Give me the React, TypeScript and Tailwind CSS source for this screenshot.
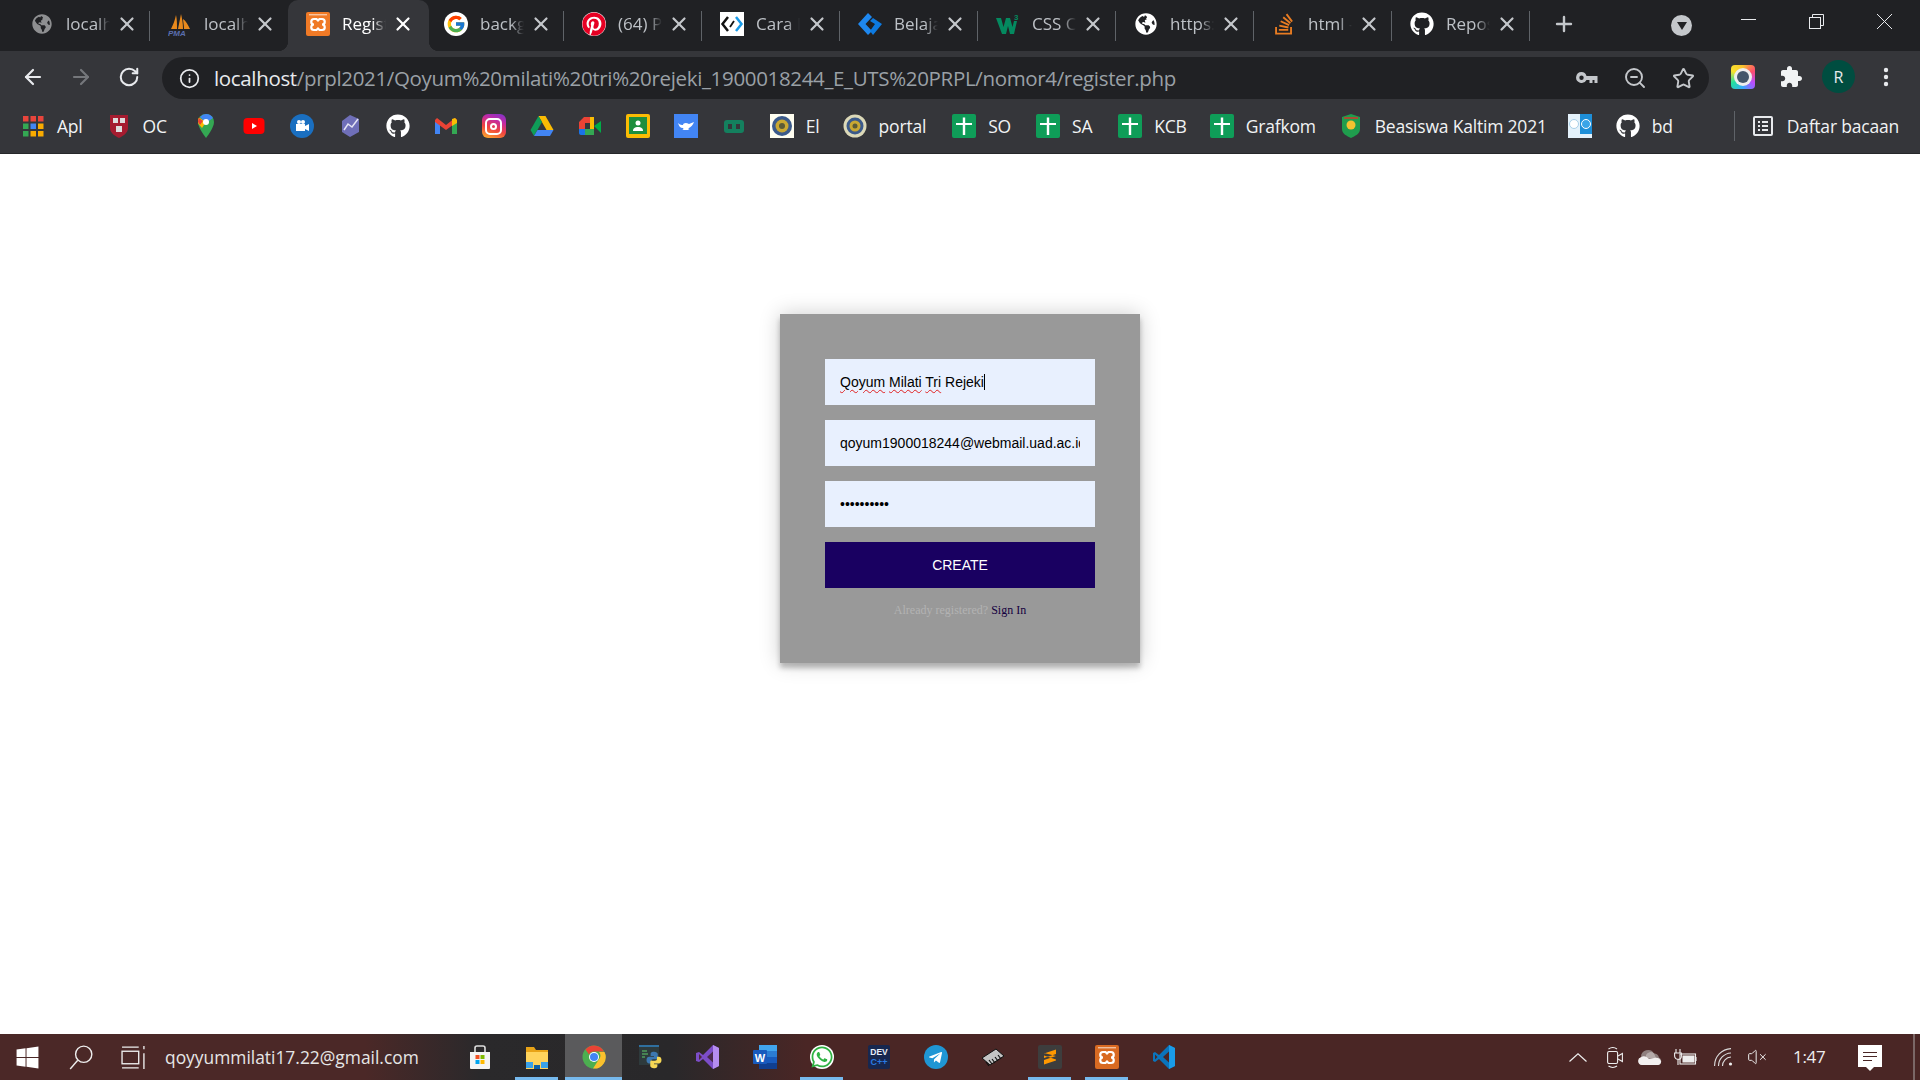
import React from "react";
import { FaGithub, FaGlobeAmericas, FaPinterest, FaStackOverflow, FaWhatsapp, FaTelegramPlane, FaWindows } from "react-icons/fa";
import { FcGoogle } from "react-icons/fc";
import { ArrowLeft, ArrowRight, RotateCw, Info, ZoomOut, Star, Plus, X, VolumeX } from "lucide-react";

const Xampp = ({ dim = false }: { dim?: boolean }) => (
  <svg viewBox="0 0 24 24" className="w-6 h-6">
    <rect x="0" y="0" width="24" height="24" rx="2" fill={dim ? "#d96a22" : "#f07a26"} />
    <path d="M3 2.800h18" stroke="#fff" strokeWidth="1" opacity="0.8" />
    <path d="M10.500 7H8a2.700 2.700 0 0 0 0 5.500 2.700 2.700 0 0 0 0 5.500h2.500l1.500-1.500 1.500 1.500H16a2.700 2.700 0 0 0 0-5.500 2.700 2.700 0 0 0 0-5.500h-2.500L12 8.500z" stroke="#fff" strokeWidth="2.200" fill="none" />
  </svg>
);

const Pma = () => (
  <svg viewBox="0 0 24 24" className="w-6 h-6">
    <path d="M3 17C5 13 7 8 8 3c1 4 1 9 1 14zM10 17c1-5 2-10 3-15 1 4 2 9 2 15zM16 17c0-4-1-8-1-10 3 2 5 6 7 10z" fill="#e8891d" />
    <text x="0" y="23.500" fontSize="8" fontStyle="italic" fontWeight="700" fill="#5b6fb0" fontFamily="Liberation Sans, sans-serif">PMA</text>
  </svg>
);

const GoogleFav = () => (
  <span className="w-6 h-6 rounded-full bg-white flex items-center justify-center"><FcGoogle className="w-5 h-5" /></span>
);
const PinFav = () => (
  <span className="w-6 h-6 rounded-full bg-white flex items-center justify-center"><FaPinterest className="w-6 h-6 text-[#e60023]" /></span>
);
const CaraFav = () => (
  <svg viewBox="0 0 24 24" className="w-6 h-6">
    <rect width="24" height="24" fill="#fff" />
    <path d="M8 5 2.500 12 8 19" stroke="#111" strokeWidth="2.500" fill="none" />
    <path d="M16 5l5.500 7-5.500 7" stroke="#1a9be8" strokeWidth="2.500" fill="none" />
    <path d="M10 15l4-6" stroke="#111" strokeWidth="1.800" />
  </svg>
);
const BelajarFav = () => (
  <svg viewBox="0 0 24 24" className="w-6 h-6">
    <path d="M10 1 0 12l10 11 4-4-6.500-7L14 5z" fill="#1e88f0" />
    <path d="M15 6l9 6-9 11-3-4 5-7-5-3z" fill="#0d7ae0" />
  </svg>
);
const W3Fav = () => (
  <svg viewBox="0 0 24 24" className="w-6 h-6">
    <path d="M0 6h5l2.500 9L10 6h4l2.500 9L18 9h3l-3 13h-4l-2-8-2 8H6z" fill="#04895f" />
    <text x="18" y="8" fontSize="8" fontWeight="700" fill="#04895f" fontFamily="Liberation Sans, sans-serif">3</text>
  </svg>
);
const GlobeWhite = () => <span className="w-6 h-6 rounded-full flex items-center justify-center"><FaGlobeAmericas className="w-[22px] h-[22px] text-white" /></span>;
const GitFav = () => <span className="w-6 h-6 rounded-full flex items-center justify-center"><FaGithub className="w-6 h-6 text-white" /></span>;

const tabs: { icon: React.ReactNode; label: string; active?: boolean }[] = [
  { icon: <FaGlobeAmericas className="w-5 h-5 text-[#8e8f91]" />, label: "localhost / 127" },
  { icon: <Pma />, label: "localhost / 127" },
  { icon: <Xampp />, label: "Register", active: true },
  { icon: <GoogleFav />, label: "background" },
  { icon: <PinFav />, label: "(64) Pinterest" },
  { icon: <CaraFav />, label: "Cara Membuat" },
  { icon: <BelajarFav />, label: "Belajar Web" },
  { icon: <W3Fav />, label: "CSS Colors" },
  { icon: <GlobeWhite />, label: "https://www" },
  { icon: <FaStackOverflow className="w-6 h-6 text-[#e87c22]" />, label: "html - Stack" },
  { icon: <GitFav />, label: "Repository" },
];

const Tab = ({ icon, label, active, sep }: { icon: React.ReactNode; label: string; active?: boolean; sep: boolean }) => (
  <div className={`relative h-[51px] flex items-center shrink-0 pb-[3px] ${active ? "bg-[#35363a] rounded-t-[10px] w-[141px] -mr-[3px]" : "w-[138px]"}`}>
    {active && <span className="absolute left-[-10px] bottom-0 w-[10px] h-[10px] bg-[radial-gradient(circle_at_0_0,#202124_10px,#35363a_10.5px)]" />}
    {active && <span className="absolute right-[-10px] bottom-0 w-[10px] h-[10px] bg-[radial-gradient(circle_at_100%_0,#202124_10px,#35363a_10.5px)]" />}
    <span className="ml-[18px] w-6 h-6 flex items-center justify-center shrink-0">{icon}</span>
    <span className={`ml-[12px] w-[44px] overflow-hidden whitespace-nowrap text-[17px] leading-[24px] [mask-image:linear-gradient(90deg,#000_70%,transparent)] ${active ? "text-white" : "text-[#bdc1c6]"}`}>{label}</span>
    <X className={`ml-[6px] w-[22px] h-[22px] shrink-0 ${active ? "text-white" : "text-[#c4c7cb]"}`} strokeWidth={2.4} />
    {sep && <span className="absolute right-0 top-[11px] h-[30px] w-px bg-[#5f6368]" />}
  </div>
);

const TabBar = () => (
  <div className="h-[51px] bg-[#202124] flex items-center pl-[12px] shrink-0">
    {tabs.map((t, i) => (
      <Tab key={i} icon={t.icon} label={t.label} active={t.active} sep={!t.active && i !== 1} />
    ))}
    <Plus className="ml-[22px] w-6 h-6 text-[#c4c7cb] shrink-0 -mt-[3px]" strokeWidth={2.4} />
    <span className="ml-[95px] w-[21px] h-[21px] rounded-full bg-[#c4c7cb] flex items-center justify-center shrink-0">
      <span className="w-0 h-0 border-l-[5px] border-r-[5px] border-t-[8px] border-l-transparent border-r-transparent border-t-[#202124]" />
    </span>
    <svg viewBox="0 0 15 15" className="ml-[49px] w-[15px] h-[15px] -mt-[8px] shrink-0" stroke="#e8eaed" strokeWidth="1"><path d="M0 5.500h15" /></svg>
    <svg viewBox="0 0 15 15" className="ml-[53px] w-[15px] h-[15px] -mt-[8px] shrink-0" fill="none" stroke="#e8eaed" strokeWidth="1"><rect x=".5" y="3.500" width="11" height="11" /><path d="M3.500 3.500V.5h11v11h-3" /></svg>
    <svg viewBox="0 0 15 15" className="ml-[53px] w-[15px] h-[15px] -mt-[8px] shrink-0" stroke="#e8eaed" strokeWidth="1"><path d="M0 0l15 15M15 0 0 15" /></svg>
  </div>
);

const RingExt = () => (
  <span className="w-6 h-[24px] rounded-[4px] bg-[conic-gradient(#f9c22e,#ff4d6d,#b84dff,#38a6ff,#22e0a0,#f9e22e,#f9c22e)] flex items-center justify-center">
    <span className="w-[18px] h-[18px] rounded-full bg-[#eee] flex items-center justify-center">
      <span className="w-[12px] h-[12px] rounded-full bg-[#44566a]" />
    </span>
  </span>
);

const Toolbar = () => (
  <div className="h-[51px] bg-[#35363a] flex items-center shrink-0">
    <ArrowLeft className="ml-[21px] w-6 h-6 text-[#e8eaed] shrink-0" strokeWidth={2.2} />
    <ArrowRight className="ml-[24px] w-6 h-6 text-[#75777b] shrink-0" strokeWidth={2.2} />
    <RotateCw className="ml-[25px] w-[22px] h-[22px] text-[#e8eaed] shrink-0" strokeWidth={2.2} />
    <div className="ml-[22px] w-[1547px] h-[42px] mt-[3px] rounded-full bg-[#202124] flex items-center shrink-0">
      <Info className="ml-[17px] w-[21px] h-[21px] text-[#e8eaed] shrink-0" strokeWidth={2} />
      <span className="ml-[14px] text-[20.500px] whitespace-nowrap text-[#9aa0a6] tracking-[-0.34px]">
        <span className="text-[#e8eaed]">localhost</span>/prpl2021/Qoyum%20milati%20tri%20rejeki_1900018244_E_UTS%20PRPL/nomor4/register.php
      </span>
      <div className="ml-auto flex items-center">
        <svg viewBox="0 0 22 12" className="w-[22px] h-[12px]" fill="#c4c7cb">
          <path d="M5.500 0a5.500 5.500 0 1 0 5 8h3v3h3V8h2v3h3V4H10.500a5.500 5.500 0 0 0-5-4zm0 3.500a2.200 2.200 0 1 1 0 4.400 2.200 2.200 0 0 1 0-4.400z" />
        </svg>
        <ZoomOut className="ml-[25px] w-[24px] h-[24px] text-[#c4c7cb]" strokeWidth={1.900} />
        <Star className="ml-[25px] w-[23px] h-[23px] text-[#c4c7cb] mr-[14px]" strokeWidth={2} />
      </div>
    </div>
    <span className="ml-[22px] shrink-0"><RingExt /></span>
    <svg viewBox="0 0 24 24" className="ml-[24px] w-[24px] h-[24px] shrink-0" fill="#f1f3f4">
      <path d="M20.500 11H19V7c0-1.100-.9-2-2-2h-4V3.500C13 2.120 11.880 1 10.500 1S8 2.120 8 3.500V5H4c-1.100 0-1.990.9-1.990 2v3.800H3.500c1.490 0 2.700 1.210 2.700 2.700s-1.210 2.700-2.700 2.700H2V20c0 1.100.9 2 2 2h3.800v-1.500c0-1.490 1.210-2.700 2.700-2.700 1.490 0 2.700 1.210 2.700 2.700V22H17c1.100 0 2-.9 2-2v-4h1.500c1.380 0 2.500-1.120 2.500-2.500S21.880 11 20.500 11z" />
    </svg>
    <span className="ml-[19px] w-[33px] h-[33px] rounded-full bg-[#004d40] text-[#e8eaed] text-[16px] flex items-center justify-center shrink-0">R</span>
    <svg viewBox="0 0 24 24" className="ml-[19px] w-[24px] h-[24px] shrink-0" fill="#e8eaed"><circle cx="12" cy="5" r="2.200" /><circle cx="12" cy="12" r="2.200" /><circle cx="12" cy="19" r="2.200" /></svg>
  </div>
);

const S = ({ children }: { children: React.ReactNode }) => <svg viewBox="0 0 24 24" className="w-6 h-6 shrink-0">{children}</svg>;

const Grid9 = () => (
  <S>
    {["#e8453c", "#e8453c", "#e8453c", "#34a853", "#4285f4", "#f9ab00", "#34a853", "#f9ab00", "#f9ab00"].map((c, i) => (
      <rect key={i} x={2 + (i % 3) * 7.500} y={2 + Math.floor(i / 3) * 7.500} width="5.500" height="5.500" fill={c} />
    ))}
  </S>
);
const Harvard = () => (
  <S>
    <path d="M3 1h18v13c0 5-5 8-9 10-4-2-9-5-9-10z" fill="#a51c30" />
    <rect x="6" y="4" width="5" height="5" fill="#ddd" /><rect x="13" y="4" width="5" height="5" fill="#ddd" /><rect x="9" y="12" width="6" height="6" fill="#ddd" />
  </S>
);
const Maps = () => (
  <S>
    <path d="M12 0a8 8 0 0 0-8 8c0 6 8 16 8 16s8-10 8-16a8 8 0 0 0-8-8z" fill="#34a853" />
    <path d="M5 3.500 12 8 8 14 4.500 10C3.500 7 4 5 5 3.500z" fill="#fbbc04" />
    <path d="M12 0a8 8 0 0 1 7 4l-7 5-6-6a8 8 0 0 1 6-3z" fill="#4285f4" />
    <path d="M5 4l4 3-3 4-2-3c0-1.500.3-3 1-4z" fill="#ea4335" />
    <circle cx="12" cy="8" r="3" fill="#fff" />
  </S>
);
const Yt = () => (
  <S>
    <rect x="1.500" y="4" width="21" height="16" rx="4" fill="#f00" />
    <path d="M10 9l5 3-5 3z" fill="#fff" />
  </S>
);
const ZoomBm = () => (
  <S>
    <circle cx="12" cy="12" r="12" fill="#1a6fc0" />
    <path d="M6 10h9v7H6zM15 12l4-2v7l-4-2z" fill="#fff" />
    <circle cx="9" cy="8" r="2" fill="#fff" /><circle cx="13" cy="8" r="2" fill="#fff" />
  </S>
);
const Hex = () => (
  <S>
    <path d="M12 1l9 4 0 13-9 5-8-5V7z" fill="#6f6fb8" />
    <path d="M6 16l4-6 4 3 6-8" stroke="#e4e4f4" strokeWidth="1.500" fill="none" />
  </S>
);
const Gmail = () => (
  <S>
    <path d="M1 20V6l5 4v10z" fill="#4285f4" />
    <path d="M23 20V6l-5 4v10z" fill="#34a853" />
    <path d="M1 6l2-2 9 7 9-7 2 2v2l-11 8L1 8z" fill="#ea4335" />
    <path d="M18 5l3-1 2 2v3l-5 3z" fill="#fbbc04" />
  </S>
);
const Ig = () => (
  <span className="w-6 h-6 rounded-[6px] bg-[linear-gradient(20deg,#fdb32b,#f0433f_40%,#c32aa3_70%,#7a35d0)] flex items-center justify-center shrink-0">
    <span className="w-[17px] h-[17px] rounded-[5px] border-2 border-white flex items-center justify-center">
      <span className="w-[7px] h-[7px] rounded-full border-2 border-white" />
    </span>
  </span>
);
const Drive = () => (
  <S>
    <path d="M8.500 2h7l8 14h-7z" fill="#fbbc04" />
    <path d="M8.500 2 .5 16l3.500 6 8-14z" fill="#0f9d58" />
    <path d="M7.500 16h16l-3.500 6H4z" fill="#4285f4" />
  </S>
);
const Meet = () => (
  <S>
    <path d="M1 8 6 3h6v6H7v6H1z" fill="#ea4335" />
    <path d="M1 15h6v6H3c-1 0-2-1-2-2z" fill="#1a73e8" />
    <path d="M7 15h9v6H7z" fill="#34a853" />
    <path d="M12 3h4v12h-4l0-6z" fill="#fbbc04" />
    <path d="M16 12l7-5v12z" fill="#00ac47" />
  </S>
);
const Classroom = () => (
  <S>
    <rect width="24" height="24" rx="2" fill="#fbbc04" />
    <rect x="3" y="3" width="18" height="17" fill="#1e8e3e" />
    <circle cx="12" cy="9" r="2.500" fill="#fff" />
    <path d="M7 17c0-3 2-4 5-4s5 1 5 4z" fill="#fff" />
  </S>
);
const Lamp = () => (
  <S>
    <rect width="24" height="24" fill="#4285f4" />
    <path d="M4 9c2 2 4 2 5 2 0-2 3-3 6-1l5-2c-1 3-3 5-5 6-1 1-1 2 1 2H8c1 0 2-1 1-2-3 0-4-2-5-5z" fill="#fff" />
  </S>
);
const GreenChip = () => (
  <S>
    <rect x="2" y="6" width="20" height="13" rx="3" fill="#14805e" />
    <rect x="6" y="10" width="4" height="5" fill="#35363a" /><rect x="14" y="10" width="4" height="5" fill="#35363a" />
  </S>
);
const Seal = () => (
  <S>
    <circle cx="12" cy="12" r="11.500" fill="#dcd9b8" />
    <circle cx="12" cy="12" r="8.500" fill="#3b5a8a" />
    <circle cx="12" cy="12" r="5.500" fill="#c9a832" />
    <circle cx="12" cy="12" r="2.500" fill="#5a5a36" />
  </S>
);
const SealSq = () => (
  <S>
    <rect width="24" height="24" fill="#fffef0" />
    <circle cx="12" cy="12" r="10" fill="#3b5a8a" />
    <circle cx="12" cy="12" r="6.500" fill="#c9a832" />
    <circle cx="12" cy="12" r="3" fill="#5a5a36" />
  </S>
);
const Cross = () => (
  <S>
    <rect width="24" height="24" rx="2" fill="#0f9d58" />
    <path d="M4 9h16v2H4zM10.800 3.500h2.400V21h-2.400z" fill="#fff" />
  </S>
);
const Kaltim = () => (
  <S>
    <path d="M3 3 12 0l9 3v12c0 5-5 7-9 9-4-2-9-4-9-9z" fill="#1f9d4d" />
    <circle cx="12" cy="11" r="4.500" fill="#f2c230" />
    <path d="M5 4h14" stroke="#d8332c" strokeWidth="1.500" />
  </S>
);
const Share = () => (
  <S>
    <rect width="24" height="24" fill="#e4f2fb" />
    <rect x="12" width="12" height="20" fill="#1e8fd8" />
    <circle cx="6" cy="10" r="4.500" fill="#fff" stroke="#a8cfe8" />
    <circle cx="18" cy="10" r="4.500" fill="#3aa5e8" stroke="#fff" />
  </S>
);
const GitBm = () => <span className="w-6 h-6 rounded-full flex items-center justify-center shrink-0"><FaGithub className="w-6 h-6 text-white" /></span>;

const bookmarks: { icon: React.ReactNode; label?: string; extra?: string }[] = [
  { icon: <Grid9 />, label: "Apl" },
  { icon: <Harvard />, label: "OC" },
  { icon: <Maps />, extra: "ml-[3px]" }, { icon: <Yt /> }, { icon: <ZoomBm /> }, { icon: <Hex /> }, { icon: <GitBm /> },
  { icon: <Gmail /> }, { icon: <Ig /> }, { icon: <Drive /> }, { icon: <Meet /> }, { icon: <Classroom /> },
  { icon: <Lamp /> }, { icon: <GreenChip /> },
  { icon: <SealSq />, label: "El" },
  { icon: <Seal />, label: "portal", extra: "-ml-[1px]" },
  { icon: <Cross />, label: "SO", extra: "ml-[2px]" },
  { icon: <Cross />, label: "SA", extra: "ml-[1px]" },
  { icon: <Cross />, label: "KCB", extra: "ml-[2px]" },
  { icon: <Cross />, label: "Grafkom", extra: "-ml-[1px]" },
  { icon: <Kaltim />, label: "Beasiswa Kaltim 2021", extra: "-ml-[1px]" },
  { icon: <Share />, extra: "-ml-[3px]" },
  { icon: <GitBm />, label: "bd" },
];

const Bookmarks = () => (
  <div className="h-[52px] bg-[#35363a] border-b border-[#26272a] flex items-center pl-[21px] pb-[3px] shrink-0 text-[#f1f3f4] text-[17.500px]">
    <div className="flex items-center gap-[24px]">
      {bookmarks.map((b, i) => (
        <div key={i} className={`flex items-center gap-[12px] shrink-0 ${b.extra ?? ""}`}>
          {b.icon}
          {b.label && <span className="whitespace-nowrap tracking-[-0.2px]">{b.label}</span>}
        </div>
      ))}
    </div>
    <div className="ml-auto flex items-center mr-[21px]">
      <span className="w-px h-[30px] bg-[#5f6368] mr-[16px]" />
      <svg viewBox="0 0 24 24" className="w-[24px] h-[24px]" fill="none" stroke="#e8eaed" strokeWidth="2">
        <rect x="3" y="3" width="18" height="18" rx="1" /><path d="M7 8h2M11 8h6M7 12h2M11 12h6M7 16h2M11 16h6" />
      </svg>
      <span className="ml-[12px] whitespace-nowrap tracking-[-0.2px]">Daftar bacaan</span>
    </div>
  </div>
);

const Wavy = ({ children }: { children: React.ReactNode }) => (
  <span className="underline decoration-wavy decoration-[#e02020] decoration-1 underline-offset-2">{children}</span>
);

const Form = () => (
  <main className="flex-1 bg-white pt-[160px]">
    <div className="w-[360px] h-[349px] mx-auto bg-[#999999] p-[45px] text-center shadow-[0_0_20px_rgba(0,0,0,0.2),0_5px_5px_rgba(0,0,0,0.24)] font-['Liberation_Sans',Arial,sans-serif]">
      <div className="h-[46px] bg-[#e8f0fe] px-[15px] flex items-center text-[14px] text-black text-left mb-[15px]">
        <span className="whitespace-pre">
          <Wavy>Qoyum</Wavy>{" "}<Wavy>Milati</Wavy>{" "}<Wavy>Tri</Wavy>{" "}Rejeki
        </span>
        <span className="inline-block w-px h-4 bg-black" />
      </div>
      <input readOnly value="qoyum1900018244@webmail.uad.ac.id" className="block w-full h-[46px] bg-[#e8f0fe] px-[15px] text-[14px] text-black mb-[15px] outline-none font-['Liberation_Sans',Arial,sans-serif]" />
      <input readOnly type="password" value="qoyum12345" className="block w-full h-[46px] bg-[#e8f0fe] px-[15px] text-[14px] text-black mb-[15px] outline-none font-['Liberation_Sans',Arial,sans-serif]" />
      <button className="block w-full h-[46px] bg-[#190061] text-white text-[14px] uppercase font-['Liberation_Sans',Arial,sans-serif]">Create</button>
      <p className="mt-[15px] text-[12px] leading-[14px] text-[#b3b3b3] font-['Liberation_Serif','Times_New_Roman',serif]">Already registered? <a className="text-[#150040]">Sign In</a></p>
    </div>
  </main>
);

const Dev = () => (
  <S>
    <rect x="1" width="22" height="24" rx="2" fill="#17274f" />
    <text x="12" y="10" textAnchor="middle" fontSize="8.500" fontWeight="700" fill="#e8eef8" fontFamily="Liberation Sans, sans-serif">DEV</text>
    <text x="12" y="20" textAnchor="middle" fontSize="9" fontWeight="700" fill="#2a7ae2" fontFamily="Liberation Sans, sans-serif">C++</text>
  </S>
);

const ChromeIcon = () => (
  <S>
    <circle cx="12" cy="12" r="11.500" fill="#4caf50" />
    <path d="M12 .5A11.500 11.500 0 0 1 22 6.500H12a5.500 5.500 0 0 0-5 3L3.500 4.500A11.500 11.500 0 0 1 12 .5z" fill="#ea4335" />
    <path d="M22.500 7A11.500 11.500 0 0 1 11 23.500L16.500 15a5.500 5.500 0 0 0 .5-8z" fill="#fbc02d" />
    <circle cx="12" cy="12" r="5" fill="#fff" />
    <circle cx="12" cy="12" r="4" fill="#4285f4" />
  </S>
);

const taskIcons: { icon: React.ReactNode; on?: boolean; active?: boolean }[] = [
  { icon: (
    <S>
      <path d="M2 7h20v16a1 1 0 0 1-1 1H3a1 1 0 0 1-1-1z" fill="#f4f4f4" />
      <path d="M7 7V3a2 2 0 0 1 2-2h6a2 2 0 0 1 2 2v4" stroke="#ddd" strokeWidth="1.600" fill="none" />
      <rect x="7.500" y="10" width="4" height="4" fill="#f25022" /><rect x="12.500" y="10" width="4" height="4" fill="#7fba00" />
      <rect x="7.500" y="15" width="4" height="4" fill="#00a4ef" /><rect x="12.500" y="15" width="4" height="4" fill="#ffb900" />
    </S>
  ) },
  { icon: (
    <S>
      <path d="M1 2h8l2 3h12v18H1z" fill="#e8a317" />
      <rect x="1" y="7" width="22" height="17" fill="#ffd35c" />
      <path d="M1 17h22v6H1z" fill="#3aa1e8" />
      <rect x="8" y="17" width="8" height="7" fill="#ffd35c" /><rect x="9" y="20" width="6" height="4" fill="#0c5fa8" />
    </S>
  ), on: true },
  { icon: <ChromeIcon />, on: true, active: true },
  { icon: (
    <S>
      <rect x="0" y="0" width="20" height="20" fill="#2e3a3c" />
      <rect x="0" y="0" width="20" height="2" fill="#2f6f9e" />
      <path d="M3 6h5M3 9h6M3 12h3" stroke="#4f9a5a" strokeWidth="1.400" />
      <g transform="translate(6 6) scale(.75)">
        <path d="M12 1c-4 0-4.500 2-4.500 3v2.500H12v1H5.500C3.500 7.500 2 9 2 12s1.500 4.500 3.500 4.500H8v-2.800c0-1.500 1-2.700 2.700-2.700h3.600c1.500 0 2.700-1.100 2.700-2.500V4c0-1.500-2.200-3-5-3z" fill="#3d78b0" />
        <path d="M12 23c4 0 4.500-2 4.500-3v-2.500H12v-1h6.500c2 0 3.500-1.500 3.500-4.500s-1.500-4.500-3.500-4.500H16v2.800c0 1.500-1 2.700-2.700 2.700H9.700C8.200 12 7 13.100 7 14.500V20c0 1.500 2.200 3 5 3z" fill="#f6d755" />
      </g>
    </S>
  ) },
  { icon: (
    <S>
      <path d="M17 0l6 3v18l-6 3-10-10-4 3-3-1V8l3-1 4 3z" fill="#7c4dc8" />
      <path d="M17 0l6 3v18l-6 3z" fill="#b58cf0" />
      <path d="M17 6.500 11 12l6 5.500z" fill="#4a2a4c" />
      <path d="M3 9v6l3-3z" fill="#4a2a3c" />
    </S>
  ) },
  { icon: (
    <S>
      <rect x="6" y="0" width="18" height="24" rx="1" fill="#2b7cd3" />
      <rect x="6" y="0" width="18" height="6" fill="#41a5ee" />
      <rect x="6" y="12" width="18" height="6" fill="#185abd" />
      <rect x="6" y="18" width="18" height="6" fill="#103f91" />
      <rect x="0" y="5" width="14" height="14" rx="1" fill="#185abd" />
      <text x="7" y="16.500" textAnchor="middle" fontSize="11" fontWeight="700" fill="#fff" fontFamily="Liberation Sans, sans-serif">W</text>
    </S>
  ) },
  { icon: <span className="w-6 h-6 rounded-full bg-white flex items-center justify-center"><FaWhatsapp className="w-6 h-6 text-[#2fb344]" /></span>, on: true },
  { icon: <Dev /> },
  { icon: <span className="w-6 h-6 rounded-full bg-[#1f96d4] flex items-center justify-center"><FaTelegramPlane className="w-[15px] h-[15px] text-white" /></span> },
  { icon: (
    <S>
      <path d="M1 13 15 4l8 7-14 9z" fill="#c4c4c4" stroke="#111" strokeWidth="1" />
      <path d="M5 17l3 4M8 15l3 4M11 14l3 4M14 12l3 4M17 10l3 4" stroke="#111" strokeWidth="1.200" />
    </S>
  ) },
  { icon: (
    <S>
      <rect width="24" height="24" rx="2" fill="#3d3d3d" />
      <path d="M6 8.500 18 4.500V9L6 13zM6 10.500 18 14.500V11L6 8zM6 15 18 11v4.500L6 19.500z" fill="#ff9800" />
    </S>
  ), on: true },
  { icon: <Xampp dim />, on: true },
  { icon: (
    <S>
      <path d="M17 0l6 3v18l-6 3L7 14l-4 3-2-1V8l2-1 4 3z" fill="#0a74bc" />
      <path d="M17 0l6 3v18l-6 3z" fill="#1a9be8" />
      <path d="M17 6.500 11 12l6 5.500z" fill="#4a2625" />
      <path d="M3 9.500v5l2.500-2.500z" fill="#4a2625" />
    </S>
  ) },
];

const Taskbar = () => (
  <div className="h-[46px] shrink-0 flex items-stretch text-white bg-[linear-gradient(90deg,#4b2827_0,#4b2827_19%,#2a292b_25%,#29282a_35%,#4a2625_42%,#4a2625_100%)]">
    <span className="ml-[15px] self-center"><FaWindows className="w-[25px] h-[25px]" /></span>
    <svg viewBox="0 0 24 24" className="ml-[28px] w-[26px] h-[26px] self-center" fill="none" stroke="#eee" strokeWidth="1.300"><circle cx="14.500" cy="9.500" r="7.500" /><path d="M9 15l-7 8" /></svg>
    <svg viewBox="0 0 24 24" className="ml-[27px] w-[25px] h-[25px] self-center" fill="none" stroke="#eee" strokeWidth="1.300"><rect x="1" y="6" width="16" height="12" /><path d="M1 2h16M1 22h16M22 1v3M22 8v15" /></svg>
    <span className="ml-[19px] self-center text-[17.400px] text-[#e6e6e6] whitespace-nowrap w-[253px]">qoyyummilati17.22@gmail.com</span>
    <div className="ml-[33px] flex items-stretch">
      {taskIcons.map((t, i) => (
        <div key={i} className={`relative w-[57px] flex items-center justify-center ${t.active ? "bg-[#5a5a5c]" : ""}`}>
          {t.icon}
          {t.on && <span className={`absolute bottom-0 h-[3px] bg-[#76b9ed] ${t.active ? "left-0 right-0" : "left-[7px] right-[7px]"}`} />}
        </div>
      ))}
    </div>
    <div className="ml-auto flex items-center text-[#eee]">
      <svg viewBox="0 0 18 9" className="w-[18px] h-[9px]" fill="none" stroke="#eee" strokeWidth="1.200"><path d="M.5 8.500 9 .8l8.500 7.700" /></svg>
      <svg viewBox="0 0 16 21" className="ml-[20px] w-[16px] h-[21px]" fill="none" stroke="#eee" strokeWidth="1.100">
        <rect x=".6" y="4.500" width="10" height="12" rx="1.500" /><path d="M11 9l4.400-2.500v8L11 12" /><path d="M1.500 2C4 .3 7.500.3 10 2M1.500 19c2.500 1.700 6 1.700 8.500 0" />
      </svg>
      <svg viewBox="0 0 24 16" className="ml-[15px] w-[24px] h-[16px]">
        <path d="M4 16a4 4 0 0 1-1-7.800A7 7 0 0 1 16 4.500a5.500 5.500 0 0 1 5 4A4 4 0 0 1 20 16z" fill="#8f7f7e" />
        <path d="M8 6a5 5 0 0 1 8-1.500L18 9 8 9z" fill="#b5aaa9" />
        <path d="M4 16a4 4 0 0 1-1-7.800C6 6 9 8 11 10l5-1c3-1 6 0 7 3 .5 2-1 4-3 4z" fill="#f3f0f0" />
      </svg>
      <svg viewBox="0 0 23 17" className="ml-[12px] w-[23px] h-[17px]" fill="none" stroke="#eee" strokeWidth="1.100">
        <rect x="6" y="5" width="15.500" height="10" /><rect x="9" y="7" width="11" height="6" fill="#eee" /><path d="M22 8v4" /><path d="M2 0v4M6 0v4M.6 4h6.800v3a3.400 3.400 0 0 1-6.800 0zM4 10v6" />
      </svg>
      <svg viewBox="0 0 19 18" className="ml-[17px] w-[19px] h-[18px]" fill="none" stroke="#ddd" strokeWidth="1.100">
        <path d="M.6 18A17 17 0 0 1 17 .6M4.500 18A13 13 0 0 1 17 5M8.500 18a9 9 0 0 1 8.500-9" /><circle cx="16.500" cy="16" r="1.600" fill="#eee" stroke="none" />
      </svg>
      <VolumeX className="ml-[14px] w-[20px] h-[20px]" strokeWidth={1.200} />
      <span className="ml-[26px] w-[36px] text-[17px] text-[#eee] tracking-[-0.3px]">1:47</span>
      <span className="relative ml-[29px] w-[24px] h-[22px] bg-white flex flex-col gap-[3px] justify-center px-[5px] mb-[2px]">
        <span className="h-px bg-[#4a2625]" /><span className="h-px bg-[#4a2625]" /><span className="h-px bg-[#4a2625] w-[9px]" />
        <span className="absolute -bottom-[4px] left-[8px] w-0 h-0 border-l-[4px] border-r-[4px] border-t-[4px] border-l-transparent border-r-transparent border-t-white" />
      </span>
      <span className="ml-[31px] w-[2px] h-full bg-[#7b6766] mr-[5px]" />
    </div>
  </div>
);

export default function App() {
  return (
    <div className="w-[1920px] h-[1080px] overflow-hidden flex flex-col font-['Open_Sans','Noto_Sans',sans-serif]">
      <TabBar />
      <Toolbar />
      <Bookmarks />
      <Form />
      <Taskbar />
    </div>
  );
}
